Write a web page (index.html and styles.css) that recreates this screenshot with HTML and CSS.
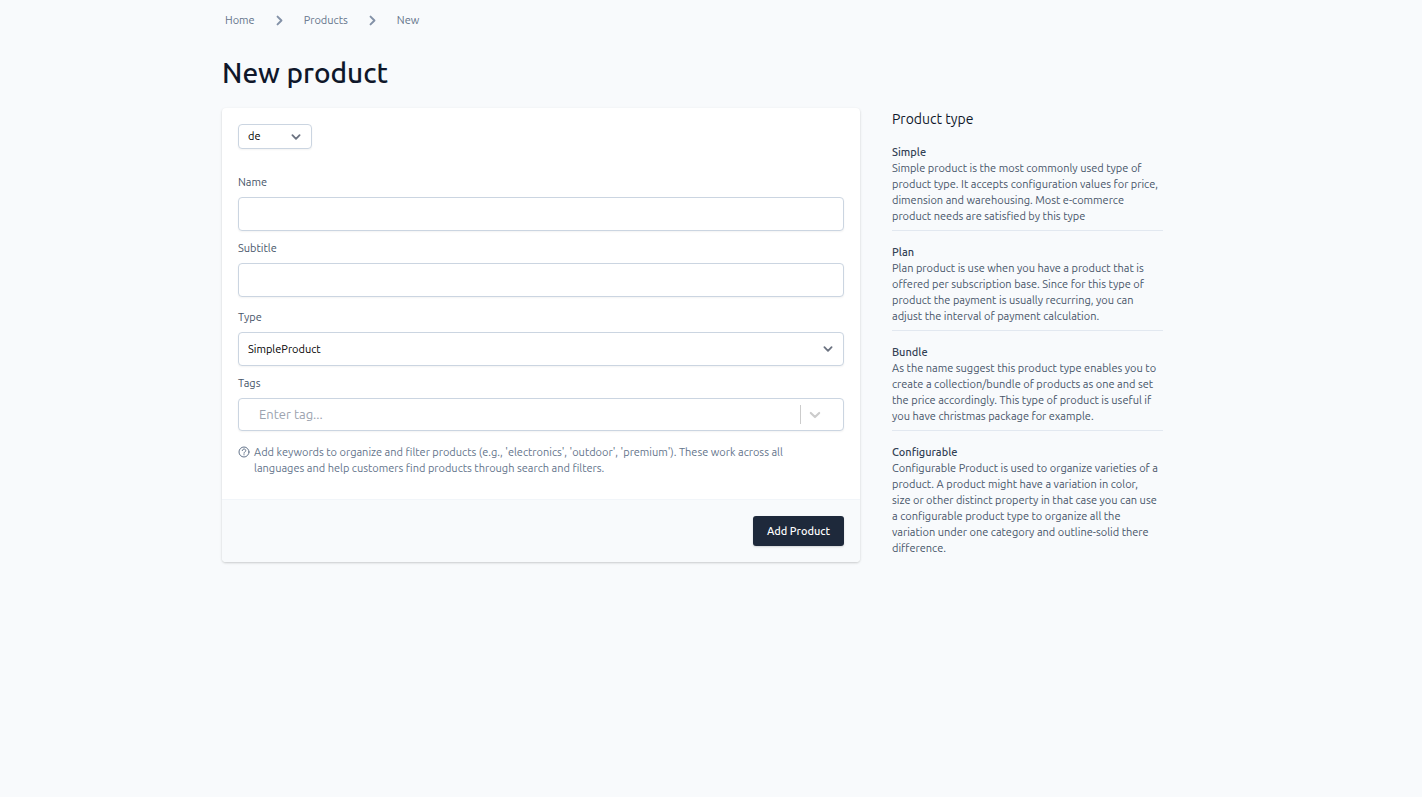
FILE: index.html
```html
<!DOCTYPE html>
<html lang="en">
<head>
    <meta charset="UTF-8">
    <meta name="viewport" content="width=device-width, initial-scale=1.0">
    <title>New product</title>
    <link rel="stylesheet" href="styles.css">
</head>
<body>

    <div class="page">

        <!-- Breadcrumb -->
        <nav class="breadcrumb" aria-label="Breadcrumb">
            <a href="#">Home</a>
            <svg viewBox="0 0 20 20" aria-hidden="true"><path d="M7 4l6 6-6 6"/></svg>
            <a href="#">Products</a>
            <svg viewBox="0 0 20 20" aria-hidden="true"><path d="M7 4l6 6-6 6"/></svg>
            <a href="#">New</a>
        </nav>

        <h1>New product</h1>

        <div class="layout">

            <!-- Product form -->
            <form class="card">
                <div class="card-body">
                    <div class="select-wrap locale">
                        <select aria-label="Language">
                            <option>de</option>
                            <option>en</option>
                        </select>
                        <svg viewBox="0 0 20 20" aria-hidden="true"><path d="M4 7l6 6 6-6"/></svg>
                    </div>

                    <div class="field">
                        <label for="name">Name</label>
                        <input class="control" type="text" id="name">
                    </div>

                    <div class="field">
                        <label for="subtitle">Subtitle</label>
                        <input class="control" type="text" id="subtitle">
                    </div>

                    <div class="field field-type">
                        <label for="type">Type</label>
                        <div class="select-wrap">
                            <select class="control" id="type">
                                <option>SimpleProduct</option>
                                <option>PlanProduct</option>
                                <option>BundleProduct</option>
                                <option>ConfigurableProduct</option>
                            </select>
                            <svg viewBox="0 0 20 20" aria-hidden="true"><path d="M4 7l6 6 6-6"/></svg>
                        </div>
                    </div>

                    <div class="field">
                        <label for="tags">Tags</label>
                        <div class="control tags">
                            <input type="text" id="tags" placeholder="Enter tag...">
                            <span class="separator"></span>
                            <svg viewBox="0 0 20 20" aria-hidden="true"><path d="M4 7l6 6 6-6"/></svg>
                        </div>
                    </div>

                    <div class="help">
                        <svg viewBox="0 0 24 24" aria-hidden="true">
                            <circle cx="12" cy="12" r="10"/>
                            <path d="M8.5 9.2a3.5 3.2 0 1 1 5.6 2.5c-1.2.8-2.1 1.3-2.1 2.8"/>
                            <path d="M12 17.2v.6"/>
                        </svg>
                        <p>Add keywords to organize and filter products (e.g., 'electronics', 'outdoor', 'premium'). These work across all languages and help customers find products through search and filters.</p>
                    </div>
                </div>

                <div class="card-footer">
                    <button type="submit">Add Product</button>
                </div>
            </form>

            <!-- Product type descriptions -->
            <aside>
                <h2>Product type</h2>
                <section>
                    <h3>Simple</h3>
                    <p>Simple product is the most commonly used type of product type. It accepts configuration values for price, dimension and warehousing. Most e-commerce product needs are satisfied by this type</p>
                </section>
                <section>
                    <h3>Plan</h3>
                    <p>Plan product is use when you have a product that is offered per subscription base. Since for this type of product the payment is usually recurring, you can adjust the interval of payment calculation.</p>
                </section>
                <section>
                    <h3>Bundle</h3>
                    <p>As the name suggest this product type enables you to create a collection/bundle of products as one and set the price accordingly. This type of product is useful if you have christmas package for example.</p>
                </section>
                <section>
                    <h3>Configurable</h3>
                    <p>
                        Configurable Product is used to organize varieties of a product. A product might have a variation in color,<br>
                        size or other distinct property in that case you can use<br>
                        a configurable product type to organize all the<br>
                        variation under one category and outline-solid there<br>
                        difference.
                    </p>
                </section>
            </aside>

        </div>
    </div>

</body>
</html>
```
FILE: styles.css
```css
* {
    box-sizing: border-box;
}

body {
    margin: 0;
    background: #f8fafc;
    color: #475569;
    font-family: Ubuntu, "Noto Sans", sans-serif;
    font-size: 11px;
    line-height: 16px;
}

h1, h2, h3, p {
    margin: 0;
}

svg {
    fill: none;
    stroke: currentColor;
    stroke-width: 2;
    stroke-linecap: round;
    stroke-linejoin: round;
}

input, select, button {
    font: inherit;
}

.page {
    max-width: 978px;
    margin: 0 auto;
    padding: 12px 0;
}

.breadcrumb {
    display: flex;
    align-items: center;
    gap: 18px;
    padding-left: 3px;
    color: #64748b;
}

.breadcrumb a {
    color: inherit;
    text-decoration: none;
}

.breadcrumb svg {
    width: 13px;
    height: 13px;
    color: #8391a7;
    stroke-width: 3;
}

h1 {
    margin: 25px 0 15px;
    color: #0f172a;
    font-size: 28px;
    font-weight: 500;
    line-height: 40px;
}

.layout {
    display: grid;
    grid-template-columns: minmax(0, 1fr) 271px;
    align-items: start;
    gap: 32px;
    padding-right: 37px;
}

/* Form card */
.card {
    overflow: hidden;
    background: #fff;
    border-radius: 4px;
    box-shadow: 0 1px 3px rgba(0, 0, 0, 0.1), 0 1px 2px rgba(0, 0, 0, 0.1);
}

.card-body {
    padding: 16px 16px 23px;
}

.field {
    margin-top: 9px;
}

.field label {
    display: block;
    margin-bottom: 7px;
}

.field-type {
    margin-top: 12px;
}

.control {
    display: block;
    width: 100%;
    height: 34px;
    padding: 0 9px;
}

.control, .locale select {
    background: #fff;
    border: 1px solid #cbd5e1;
    border-radius: 4px;
    box-shadow: 0 1px 2px rgba(0, 0, 0, 0.05);
    color: #000;
}

.select-wrap {
    position: relative;
}

.select-wrap select {
    appearance: none;
}

.select-wrap svg {
    position: absolute;
    top: 50%;
    right: 10px;
    width: 12px;
    height: 12px;
    margin-top: -6px;
    color: #6b7280;
    stroke-width: 3;
    pointer-events: none;
}

.locale {
    width: 74px;
    margin-bottom: 25px;
}

.locale select {
    display: block;
    width: 100%;
    height: 25px;
    padding: 0 9px 1px;
}

.tags {
    display: flex;
    align-items: center;
    height: 33px;
    padding: 0 21px 0 20px;
}

.tags input {
    flex: 1;
    min-width: 0;
    padding: 0 0 1px;
    border: 0;
    outline: none;
    background: none;
    font-size: 13px;
}

.tags input::placeholder {
    color: #9ca3af;
}

.separator {
    width: 1px;
    height: 19px;
    margin-right: 7px;
    background: #ccc;
}

.tags svg {
    width: 14px;
    height: 14px;
    color: #ccc;
    stroke-width: 3;
}

.help {
    display: flex;
    align-items: flex-start;
    gap: 4px;
    margin-top: 13px;
    padding-right: 32px;
    color: #64748b;
}

.help svg {
    flex: none;
    width: 12px;
    height: 12px;
    margin-top: 2px;
}

.card-footer {
    display: flex;
    justify-content: flex-end;
    padding: 16px;
    background: #f8fafc;
    border-top: 1px solid #f1f5f9;
}

button {
    height: 30px;
    padding: 0 14px;
    background: #1e293b;
    border: 0;
    border-radius: 3px;
    box-shadow: 0 1px 2px rgba(0, 0, 0, 0.15);
    color: #fff;
    font-weight: 500;
}

/* Sidebar */
h2 {
    margin: 1px 0 15px;
    color: #0f172a;
    font-size: 14px;
    font-weight: 400;
    line-height: 20px;
}

h3 {
    color: #334155;
    font-size: 11px;
    font-weight: 500;
}

section {
    margin-bottom: 13px;
    padding-bottom: 6px;
    border-bottom: 1px solid #e2e8f0;
}

section:last-child {
    margin-bottom: 0;
    border-bottom: 0;
}
```
